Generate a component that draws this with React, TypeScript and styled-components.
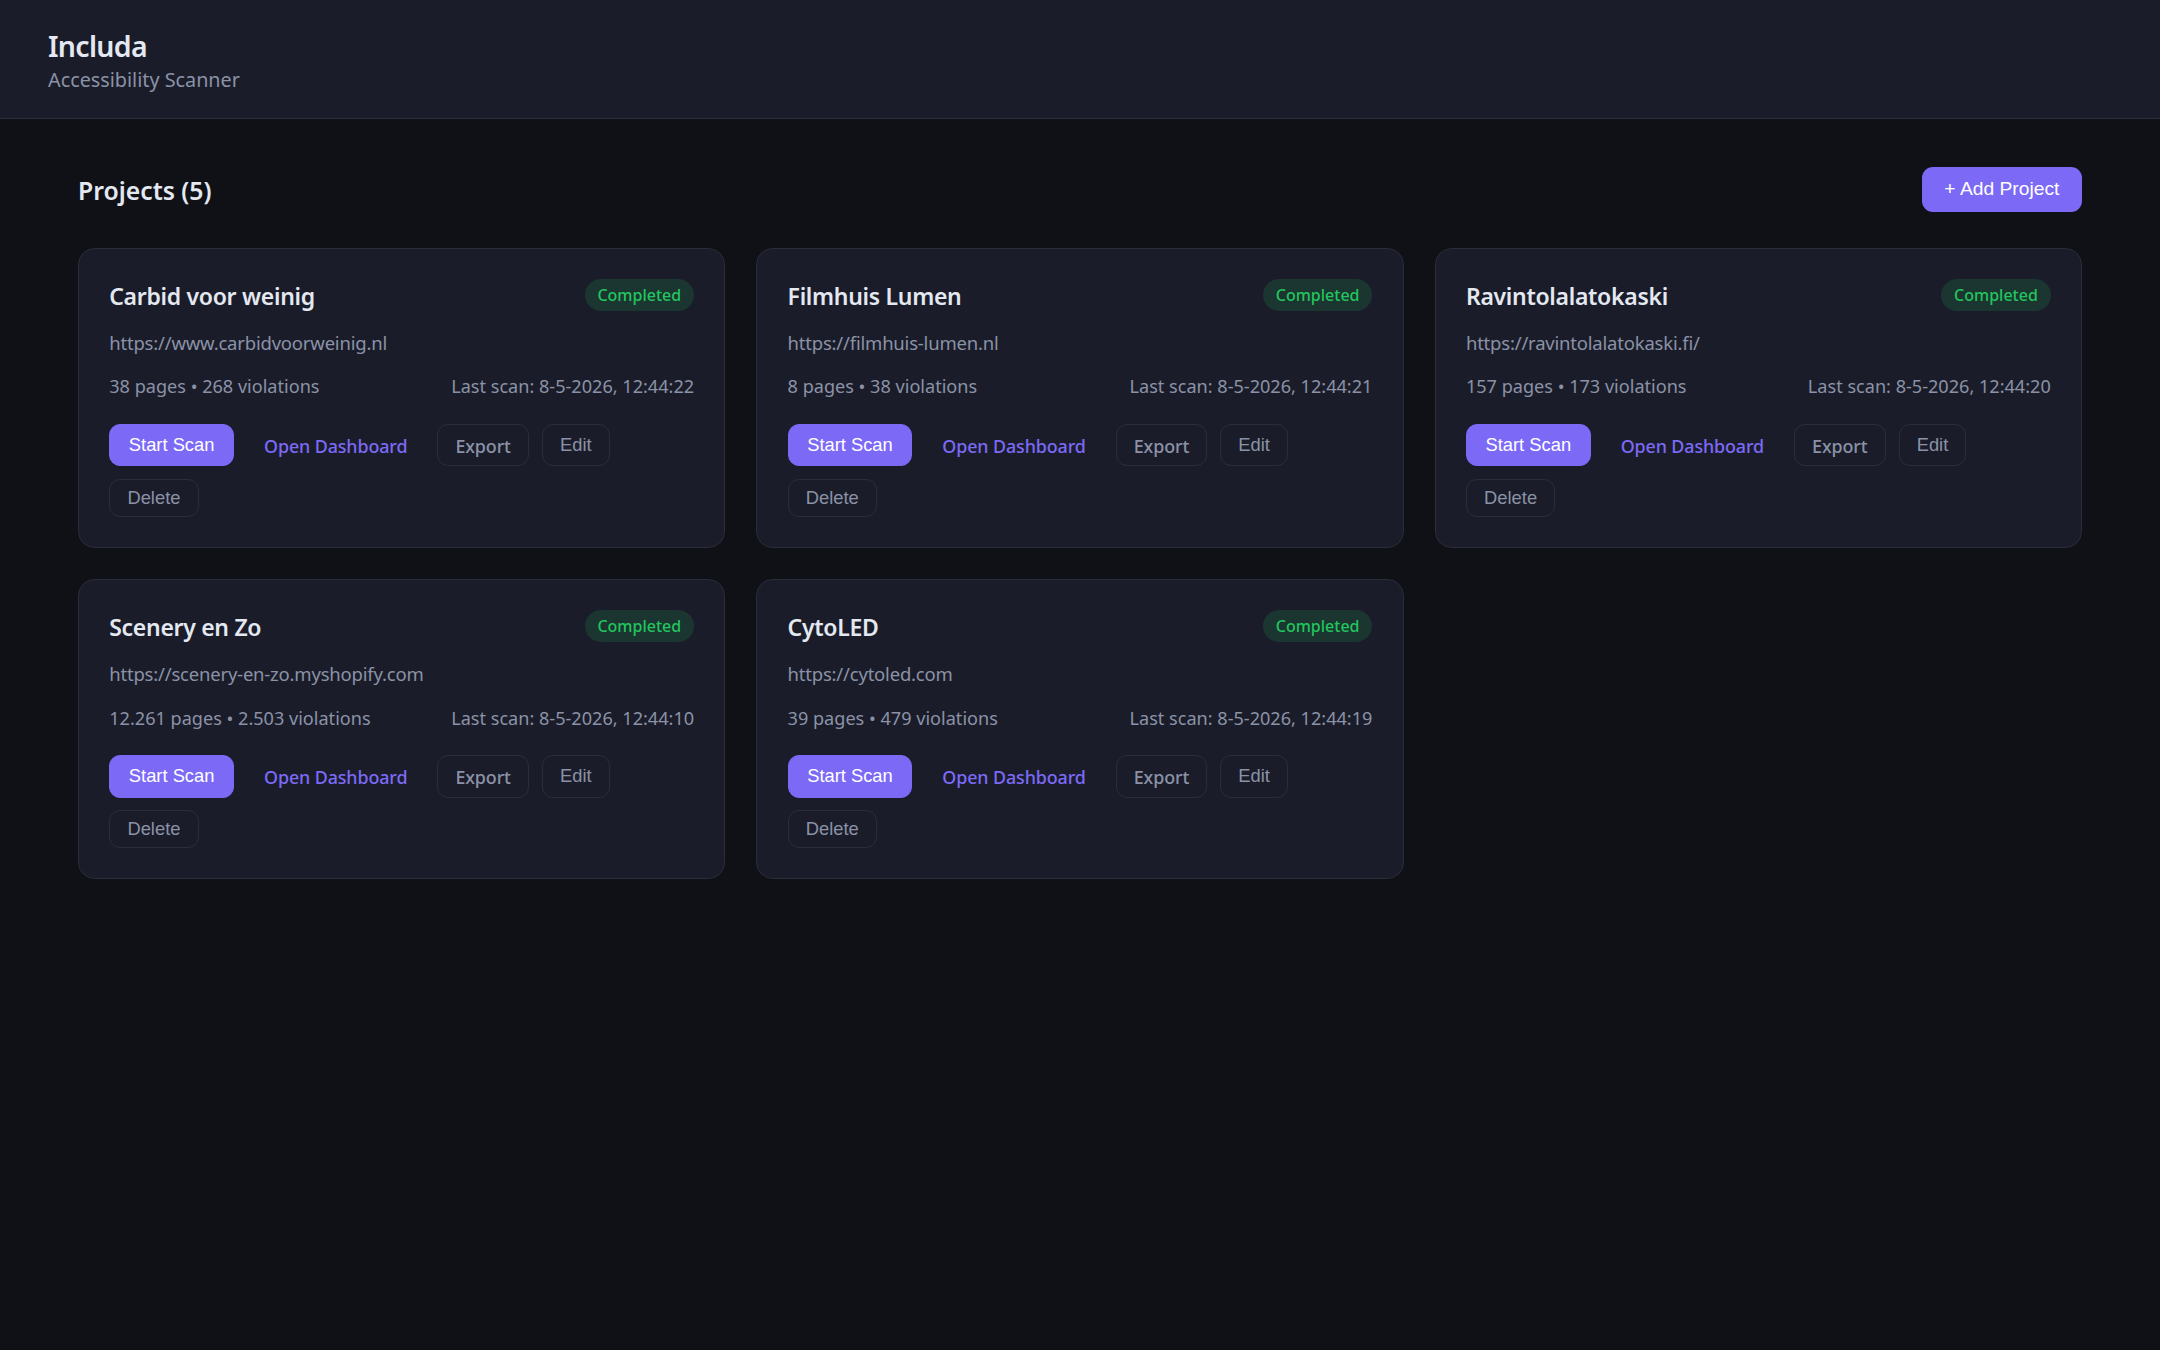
import React, { FC } from "react";
import styled, { createGlobalStyle } from "styled-components";

type Project = {
  name: string;
  url: string;
  stats: string;
  lastScan: string;
};

const projects: Project[] = [
  {
    name: "Carbid voor weinig",
    url: "https://www.carbidvoorweinig.nl",
    stats: "38 pages • 268 violations",
    lastScan: "Last scan: 8-5-2026, 12:44:22",
  },
  {
    name: "Filmhuis Lumen",
    url: "https://filmhuis-lumen.nl",
    stats: "8 pages • 38 violations",
    lastScan: "Last scan: 8-5-2026, 12:44:21",
  },
  {
    name: "Ravintolalatokaski",
    url: "https://ravintolalatokaski.fi/",
    stats: "157 pages • 173 violations",
    lastScan: "Last scan: 8-5-2026, 12:44:20",
  },
  {
    name: "Scenery en Zo",
    url: "https://scenery-en-zo.myshopify.com",
    stats: "12.261 pages • 2.503 violations",
    lastScan: "Last scan: 8-5-2026, 12:44:10",
  },
  {
    name: "CytoLED",
    url: "https://cytoled.com",
    stats: "39 pages • 479 violations",
    lastScan: "Last scan: 8-5-2026, 12:44:19",
  },
];

const GlobalStyle = createGlobalStyle`
  * {
    box-sizing: border-box;
  }

  html,
  body {
    margin: 0;
    min-height: 100%;
    background-color: #0f1117;
  }

  body {
    color: #e4e8f1;
    font-family: "Noto Sans", "Open Sans", sans-serif;
  }
`;

const Page = styled.div`
  min-height: 1350px;
  background-color: #0f1117;
`;

const Header = styled.header`
  height: 118.5px;
  padding: 26px 48px 0;
  background-color: #1a1d29;
  border-bottom: 1.4px solid #2a2d3a;
`;

const Brand = styled.h1`
  margin: 0;
  font-size: 28.5px;
  font-weight: 600;
  line-height: 40px;
  letter-spacing: -0.7px;
  color: #e4e8f1;
`;

const Tagline = styled.p`
  margin: 0;
  font-size: 19.8px;
  line-height: 27px;
  color: #8b92a7;
`;

const Main = styled.main`
  padding: 48px 78px;
`;

const Toolbar = styled.div`
  display: flex;
  align-items: center;
  justify-content: space-between;
  margin-bottom: 36px;
`;

const SectionTitle = styled.h2`
  margin: 0;
  padding-top: 3px;
  font-size: 24.75px;
  font-weight: 600;
  line-height: 34px;
  color: #e4e8f1;
`;

const AddButton = styled.button`
  height: 45.5px;
  padding: 0 22.6px;
  border: 0;
  border-radius: 11px;
  background-color: #7c6af7;
  color: #ffffff;
  font-family: "Liberation Sans", Arial, sans-serif;
  font-size: 19.25px;
`;

const Grid = styled.div`
  display: grid;
  grid-template-columns: repeat(3, 1fr);
  gap: 31px;
`;

const Card = styled.article`
  padding: 30.25px;
  background-color: #1a1d29;
  border: 1.4px solid #2a2d3a;
  border-radius: 16.5px;
`;

const CardTop = styled.div`
  display: flex;
  align-items: flex-start;
  justify-content: space-between;
`;

const CardTitle = styled.h3`
  margin: 0;
  padding-top: 1px;
  font-size: 23px;
  font-weight: 600;
  line-height: 32px;
  letter-spacing: -0.3px;
  color: #e4e8f1;
`;

const Badge = styled.span`
  height: 31.5px;
  padding: 0 12.9px;
  border-radius: 16px;
  background-color: rgba(34, 197, 94, 0.15);
  color: #22c55e;
  font-size: 16px;
  font-weight: 500;
  line-height: 32.5px;
`;

const CardUrl = styled.div`
  margin-top: 18px;
  font-size: 18.5px;
  line-height: 26px;
  letter-spacing: -0.2px;
  color: #8b92a7;
`;

const Meta = styled.div`
  display: flex;
  justify-content: space-between;
  margin-top: 18.05px;
  font-size: 18.1px;
  line-height: 24px;
  color: #8b92a7;
`;

const Actions = styled.div`
  display: flex;
  flex-wrap: wrap;
  gap: 12.5px 13px;
  margin-top: 25.7px;
`;

const ActionButton = styled.button<{ $primary?: boolean }>`
  padding: 7px ${(props) => (props.$primary ? "18.6px" : "17.2px")};
  border: 1.4px solid ${(props) => (props.$primary ? "#7c6af7" : "#2a2d3a")};
  border-radius: 11px;
  background-color: ${(props) => (props.$primary ? "#7c6af7" : "transparent")};
  color: ${(props) => (props.$primary ? "#ffffff" : "#8b92a7")};
  font-family: "Liberation Sans", Arial, sans-serif;
  font-size: 18.33px;
`;

const DashboardLink = styled.a`
  padding: 9.25px 16px 7.25px;
  border: 1.4px solid transparent;
  color: #7c6af7;
  font-size: 17.875px;
  font-weight: 500;
  line-height: 24px;
  letter-spacing: -0.1px;
  text-decoration: none;
`;

const ExportLink = styled.a`
  padding: 9.25px 17px 7.25px;
  border: 1.4px solid #2a2d3a;
  border-radius: 11px;
  color: #8b92a7;
  font-size: 17.875px;
  font-weight: 500;
  line-height: 24px;
  letter-spacing: -0.1px;
  text-decoration: none;
`;

const ProjectCard: FC<{ project: Project }> = ({ project }) => (
  <Card>
    <CardTop>
      <CardTitle>{project.name}</CardTitle>
      <Badge>Completed</Badge>
    </CardTop>
    <CardUrl>{project.url}</CardUrl>
    <Meta>
      <span>{project.stats}</span>
      <span>{project.lastScan}</span>
    </Meta>
    <Actions>
      <ActionButton $primary>Start Scan</ActionButton>
      <DashboardLink href="#">Open Dashboard</DashboardLink>
      <ExportLink href="#">Export</ExportLink>
      <ActionButton>Edit</ActionButton>
      <ActionButton>Delete</ActionButton>
    </Actions>
  </Card>
);

const App: FC = () => (
  <Page>
    <GlobalStyle />
    <Header>
      <Brand>Includa</Brand>
      <Tagline>Accessibility Scanner</Tagline>
    </Header>
    <Main>
      <Toolbar>
        <SectionTitle>Projects (5)</SectionTitle>
        <AddButton>+ Add Project</AddButton>
      </Toolbar>
      <Grid>
        {projects.map((project) => (
          <ProjectCard key={project.name} project={project} />
        ))}
      </Grid>
    </Main>
  </Page>
);

export default App;
